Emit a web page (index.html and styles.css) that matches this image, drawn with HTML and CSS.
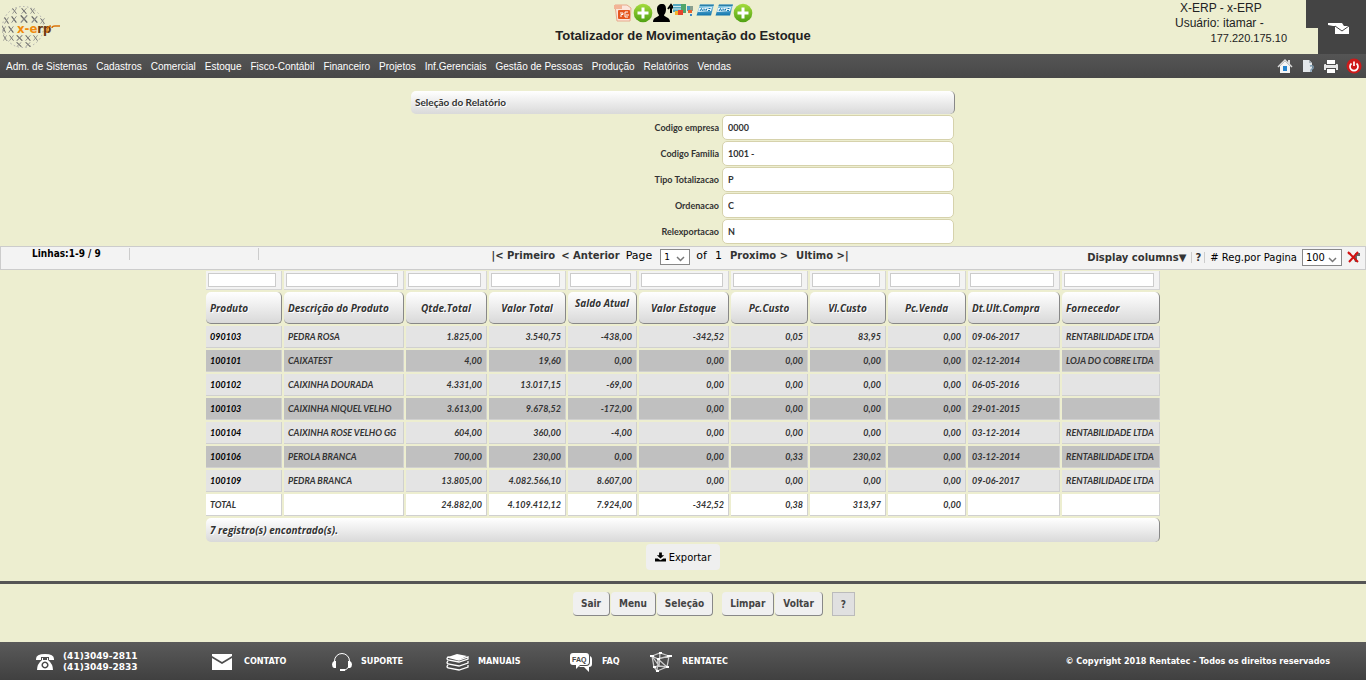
FILE: index.html
```html
<!DOCTYPE html>
<html lang="pt-BR">
<head>
    <meta charset="UTF-8">
    <meta name="viewport" content="width=device-width, initial-scale=1.0">
    <title>Totalizador de Movimentação do Estoque</title>
    <link rel="stylesheet" href="styles.css">
</head>
<body>
    <!-- Shared icon shapes -->
    <svg class="defs" width="0" height="0" aria-hidden="true">
        <defs>
            <linearGradient id="green" x1="0" y1="0" x2="0" y2="1">
                <stop offset="0" stop-color="#a5dc3c"/>
                <stop offset="1" stop-color="#4fa012"/>
            </linearGradient>
            <linearGradient id="blue" x1="0" y1="0" x2="0" y2="1">
                <stop offset="0" stop-color="#8fd0ea"/>
                <stop offset="1" stop-color="#0f74ad"/>
            </linearGradient>
            <symbol id="plus" viewBox="0 0 20 20">
                <circle cx="10" cy="10" r="9.3" fill="url(#green)"/>
                <path d="M10 4.500v11M4.500 10h11" stroke="#fff" stroke-width="3"/>
            </symbol>
            <symbol id="card" viewBox="0 0 18 14">
                <path d="M4 1.500h14l-3 11H.5z" fill="url(#blue)"/>
                <path d="M4 1.500h14l-.5 1.500H3.500z" fill="#2b7fa8"/>
                <path d="M3 5l13-1-1 4-13 1z" fill="#e6f5fb"/>
                <path d="M4 8l1.500-2.500L6.500 8M8 5.500v2l1-1 1 1 1-2M12 7.500h2M12.500 5.500h2" stroke="#1478ae" fill="none"/>
            </symbol>
            <symbol id="mark" viewBox="-2.500 -3 5 6" preserveAspectRatio="none">
                <path d="M-2-2.700L2 2.700" stroke="#666" stroke-width=".9"/>
                <path d="M2-2.700L-2 2.700" stroke="#888" stroke-width=".8"/>
            </symbol>
        </defs>
    </svg>

    <header class="top">
        <a href="#" class="logo" aria-label="x-erp">
            <svg width="62" height="50" viewBox="0 0 62 50">
                <circle cx="23" cy="27" r="20.500" fill="none" stroke="#aaa" stroke-dasharray="1.500 2.500"/>
                <use href="#mark" x="12" y="8" width="5" height="6"/>
                <use href="#mark" x="21" y="8" width="6" height="6"/>
                <use href="#mark" x="30" y="8" width="5" height="6"/>
                <use href="#mark" x="4" y="17" width="5" height="7"/>
                <use href="#mark" x="11" y="16" width="6" height="7"/>
                <use href="#mark" x="20" y="15" width="8" height="8"/>
                <use href="#mark" x="31" y="16" width="7" height="7"/>
                <use href="#mark" x="40" y="18" width="5" height="6"/>
                <use href="#mark" x="2" y="26" width="4" height="7"/>
                <use href="#mark" x="8" y="26" width="6" height="7"/>
                <use href="#mark" x="3" y="35" width="4" height="6"/>
                <use href="#mark" x="9" y="35" width="5" height="6"/>
                <use href="#mark" x="16" y="35" width="7" height="6"/>
                <use href="#mark" x="25" y="35" width="6" height="6"/>
                <use href="#mark" x="33" y="35" width="5" height="6"/>
                <use href="#mark" x="16" y="42" width="6" height="5"/>
                <use href="#mark" x="25" y="42" width="6" height="5"/>
                <text x="17" y="33" class="logo-text"><tspan fill="#f08a0c">x-e</tspan><tspan fill="#6b3a10">rp</tspan></text>
                <path d="M47 33v-4q1-3 4-3M52 28q0-2 3-2h5" fill="none" stroke="#d9730a" stroke-width="1.500"/>
            </svg>
        </a>

        <div class="heading">
            <div class="shortcuts">
                <svg width="20" height="20" viewBox="0 0 20 20">
                    <path d="M2 2h12l4 3-1 13H4z" fill="#fbe6dc" stroke="#e8a98c"/>
                    <rect x="1" y="2" width="8" height="4" fill="#f2b496"/>
                    <rect x="5" y="7" width="12" height="9" rx="1" fill="#e5561f"/>
                    <path d="M7 10h3v1.500H8V14M12 9h3M12 9v5h3M13 12h3" stroke="#fff" fill="none"/>
                </svg>
                <svg width="20" height="20"><use href="#plus"/></svg>
                <svg width="20" height="20" viewBox="0 0 20 20">
                    <path d="M9 1c3 0 4 2 4 5s-1 5-2 6c0 2 6 2 6 7H0c0-5 6-5 6-7-1-1-2-3-2-6s2-5 5-5z" fill="#000"/>
                    <path d="M18 10V4m-3 2l3-4 3 4" stroke="#000" stroke-width="2" fill="none"/>
                </svg>
                <svg width="22" height="20" viewBox="0 0 22 20">
                    <rect x="0" y="1" width="10" height="8" fill="#55a9c0"/>
                    <path d="M0 3.500h10M0 6h10" stroke="#cfe9ee"/>
                    <rect x="8" y="1" width="5" height="9" fill="#4fa56b"/>
                    <path d="M2 8h4v4H2z" fill="#f3b52c"/>
                    <rect x="5" y="7" width="5" height="5" fill="#e5432d"/>
                    <rect x="14" y="3" width="3" height="5" fill="#4a9cc2"/>
                    <rect x="17" y="3" width="3" height="5" fill="#8a9f8e"/>
                    <path d="M15 7h4v3h-4z" fill="#e8632f"/>
                    <rect x="17" y="11" width="2" height="2" fill="#3c86c7"/>
                </svg>
                <svg width="20" height="14"><use href="#card"/></svg>
                <svg width="18" height="14"><use href="#card"/></svg>
                <svg width="20" height="20"><use href="#plus"/></svg>
            </div>
            <h1>Totalizador de Movimentação do Estoque</h1>
        </div>

        <div class="user">
            <div class="user-info">
                <p>X-ERP - x-ERP</p>
                <p>Usuário: itamar -</p>
                <p class="ip">177.220.175.10</p>
            </div>
            <a href="#" class="mail" aria-label="Mensagens">
                <svg width="22" height="14" viewBox="0 0 22 14">
                    <path d="M1 1h14l2 3H6L1 3z" fill="#fff"/>
                    <rect x="8" y="4" width="14" height="8" fill="#fff"/>
                    <path d="M8 4l7 5 7-5" stroke="#444" fill="none"/>
                </svg>
            </a>
        </div>
    </header>

    <nav class="menu">
        <a href="#">Adm. de Sistemas</a>
        <a href="#">Cadastros</a>
        <a href="#">Comercial</a>
        <a href="#">Estoque</a>
        <a href="#">Fisco-Contábil</a>
        <a href="#">Financeiro</a>
        <a href="#">Projetos</a>
        <a href="#">Inf.Gerenciais</a>
        <a href="#">Gestão de Pessoas</a>
        <a href="#">Produção</a>
        <a href="#">Relatórios</a>
        <a href="#">Vendas</a>
        <div class="menu-icons">
            <a href="#" aria-label="Início">
                <svg width="16" height="16" viewBox="0 0 16 16">
                    <path d="M11 2h2v4h-2z" fill="#ddd"/>
                    <path d="M3 8l5-5 5 5v7H3z" fill="#f4f4f4"/>
                    <path d="M1 9l7-7 7 7" stroke="#ddd" stroke-width="1.500" fill="none"/>
                    <rect x="6" y="8" width="4" height="5" fill="#2584cf"/>
                </svg>
            </a>
            <a href="#" aria-label="Novo documento">
                <svg width="16" height="16" viewBox="0 0 16 16">
                    <path d="M3 2h6l3 3v9H3z" fill="#e3e7ea"/>
                    <path d="M9 2v3h3z" fill="#a9b3ba"/>
                    <path d="M10 8q4-1 3 2l-2 2v2" stroke="#7d9bb0" stroke-width="1.500" fill="none"/>
                </svg>
            </a>
            <a href="#" aria-label="Imprimir">
                <svg width="16" height="16" viewBox="0 0 16 16">
                    <path d="M4 2h8v4H4z" fill="#fff"/>
                    <path d="M1 7q0-1 1-1h1v1h10V6h1q1 0 1 1v5h-2v-2H3v2H1z" fill="#e8e8e8"/>
                    <path d="M4 11h8v4H4z" fill="#fff"/>
                </svg>
            </a>
            <a href="#" aria-label="Sair do sistema">
                <svg width="16" height="16" viewBox="0 0 16 16">
                    <circle cx="8" cy="8" r="7.500" fill="#cf1a1a"/>
                    <path d="M5.500 5.500a4 4 0 1 0 5 0M8 3.500V8" stroke="#fff" stroke-width="1.700" fill="none"/>
                </svg>
            </a>
        </div>
    </nav>

    <main>
        <!-- Report filter -->
        <form class="selection">
            <h2 class="bar">Seleção do Relatório</h2>
            <div class="field">
                <label for="empresa">Codigo empresa</label>
                <input type="text" id="empresa" value="0000" readonly>
            </div>
            <div class="field">
                <label for="familia">Codigo Familia</label>
                <input type="text" id="familia" value="1001 -" readonly>
            </div>
            <div class="field">
                <label for="tipo">Tipo Totalizacao</label>
                <input type="text" id="tipo" value="P" readonly>
            </div>
            <div class="field">
                <label for="ordem">Ordenacao</label>
                <input type="text" id="ordem" value="C" readonly>
            </div>
            <div class="field">
                <label for="relexp">Relexportacao</label>
                <input type="text" id="relexp" value="N" readonly>
            </div>
        </form>

        <!-- Paging toolbar -->
        <div class="toolbar">
            <div class="lines">
                <strong>Linhas:1-9 / 9</strong>
                <span></span>
            </div>
            <div class="pager">
                <a href="#">|&lt; Primeiro</a>
                <a href="#">&lt; Anterior</a>
                <label for="page">Page</label>
                <select id="page"><option>1</option></select>
                <span>of</span>
                <span class="total">1</span>
                <a href="#">Proximo &gt;</a>
                <a href="#" class="last">Ultimo &gt;|</a>
            </div>
            <div class="options">
                <a href="#">Display columns▼</a>
                <a href="#" class="help">?</a>
                <label for="rows"># Reg.por Pagina</label>
                <select id="rows"><option>100</option></select>
                <a href="#" aria-label="Limpar filtro">
                    <svg width="13" height="12" viewBox="0 0 13 12">
                        <path d="M6 5h4v6H8zM8 2h5v3H9z" fill="#666"/>
                        <path d="M1 1l10 10M11 1L2 11M1 2l3 1" stroke="#d41111" stroke-width="2" fill="none"/>
                    </svg>
                </a>
            </div>
        </div>

        <table class="report">
            <colgroup>
                <col class="w76"><col class="w120"><col class="w81"><col class="w77"><col class="w69"><col class="w90">
                <col class="w77"><col class="w76"><col class="w78"><col class="w92"><col class="w98">
            </colgroup>
            <thead>
                <tr class="filters">
                    <td><input type="text" aria-label="Filtrar Produto"></td>
                    <td><input type="text" aria-label="Filtrar Descrição"></td>
                    <td><input type="text" aria-label="Filtrar Qtde.Total"></td>
                    <td><input type="text" aria-label="Filtrar Valor Total"></td>
                    <td><input type="text" aria-label="Filtrar Saldo Atual"></td>
                    <td><input type="text" aria-label="Filtrar Valor Estoque"></td>
                    <td><input type="text" aria-label="Filtrar Pc.Custo"></td>
                    <td><input type="text" aria-label="Filtrar Vl.Custo"></td>
                    <td><input type="text" aria-label="Filtrar Pc.Venda"></td>
                    <td><input type="text" aria-label="Filtrar Dt.Ult.Compra"></td>
                    <td><input type="text" aria-label="Filtrar Fornecedor"></td>
                </tr>
                <tr>
                    <th class="text">Produto</th>
                    <th class="text">Descrição do Produto</th>
                    <th>Qtde.Total</th>
                    <th>Valor Total</th>
                    <th class="sorted">Saldo Atual</th>
                    <th>Valor Estoque</th>
                    <th>Pc.Custo</th>
                    <th>Vl.Custo</th>
                    <th>Pc.Venda</th>
                    <th class="text">Dt.Ult.Compra</th>
                    <th class="text">Fornecedor</th>
                </tr>
            </thead>
            <tbody>
                <tr><td>090103</td><td>PEDRA ROSA</td><td>1.825,00</td><td>3.540,75</td><td>-438,00</td><td>-342,52</td><td>0,05</td><td>83,95</td><td>0,00</td><td>09-06-2017</td><td>RENTABILIDADE LTDA</td></tr>
                <tr><td>100101</td><td>CAIXATEST</td><td>4,00</td><td>19,60</td><td>0,00</td><td>0,00</td><td>0,00</td><td>0,00</td><td>0,00</td><td>02-12-2014</td><td>LOJA DO COBRE LTDA</td></tr>
                <tr><td>100102</td><td>CAIXINHA DOURADA</td><td>4.331,00</td><td>13.017,15</td><td>-69,00</td><td>0,00</td><td>0,00</td><td>0,00</td><td>0,00</td><td>06-05-2016</td><td></td></tr>
                <tr><td>100103</td><td>CAIXINHA NIQUEL VELHO</td><td>3.613,00</td><td>9.678,52</td><td>-172,00</td><td>0,00</td><td>0,00</td><td>0,00</td><td>0,00</td><td>29-01-2015</td><td></td></tr>
                <tr><td>100104</td><td>CAIXINHA ROSE VELHO GG</td><td>604,00</td><td>360,00</td><td>-4,00</td><td>0,00</td><td>0,00</td><td>0,00</td><td>0,00</td><td>03-12-2014</td><td>RENTABILIDADE LTDA</td></tr>
                <tr><td>100106</td><td>PEROLA BRANCA</td><td>700,00</td><td>230,00</td><td>0,00</td><td>0,00</td><td>0,33</td><td>230,02</td><td>0,00</td><td>03-12-2014</td><td>RENTABILIDADE LTDA</td></tr>
                <tr><td>100109</td><td>PEDRA BRANCA</td><td>13.805,00</td><td>4.082.566,10</td><td>8.607,00</td><td>0,00</td><td>0,00</td><td>0,00</td><td>0,00</td><td>09-06-2017</td><td>RENTABILIDADE LTDA</td></tr>
                <tr class="sum"><td>TOTAL</td><td></td><td>24.882,00</td><td>4.109.412,12</td><td>7.924,00</td><td>-342,52</td><td>0,38</td><td>313,97</td><td>0,00</td><td></td><td></td></tr>
            </tbody>
            <tfoot>
                <tr><td colspan="11" class="bar">7 registro(s) encontrado(s).</td></tr>
            </tfoot>
        </table>

        <button type="button" class="export">
            <svg width="11" height="10" viewBox="0 0 12 10">
                <path d="M4.500 0h3v3H10L6 6.500 2 3h2.500z"/>
                <path d="M0 6.500h3l3 2 3-2h3V10H0z"/>
            </svg>
            Exportar
        </button>

        <div class="actions">
            <button type="button">Sair</button>
            <button type="button">Menu</button>
            <button type="button">Seleção</button>
            <button type="button" class="apart">Limpar</button>
            <button type="button">Voltar</button>
            <button type="button" class="question">?</button>
        </div>
    </main>

    <footer class="bottom">
        <div class="contact phone">
            <svg width="18" height="18" viewBox="0 0 18 18" fill="#fff">
                <path d="M0 6q0-5 9-5t9 5v1h-5V4H5v3H0z"/>
                <path fill-rule="evenodd" d="M6 5h1v2h4V5h1v2q5 4 5 10H1Q1 11 6 7zM9 8.500a3.500 3.500 0 1 0 .01 0zM9 10a2 2 0 1 1-.01 0z"/>
            </svg>
            <p>(41)3049-2811<br>(41)3049-2833</p>
        </div>
        <a href="#" class="contact mailto">
            <svg width="20" height="16" viewBox="0 0 20 16" fill="#fff">
                <path d="M0 0h20v2l-10 6L0 2z"/>
                <path d="M0 4l10 6 10-6v12H0z"/>
            </svg>
            CONTATO
        </a>
        <a href="#" class="contact support">
            <svg width="20" height="18" viewBox="0 0 20 18">
                <path d="M2.500 9V8a7.500 7.500 0 0 1 15 0v1M17 13q-1 3-4 4" fill="none" stroke="#fff"/>
                <path d="M4 8v7H2Q0 14 0 11.500T2 8zM16 8v7h2q2-1 2-3.500T18 8zM8 16h5v2H8z" fill="#fff"/>
            </svg>
            SUPORTE
        </a>
        <a href="#" class="contact manuals">
            <svg width="23" height="18" viewBox="0 0 23 18">
                <path d="M2 4l9-3 10 2-8 4z" fill="#fff"/>
                <path d="M2 4q-2 2 0 3l11 2 9-3V4l-9 3zM2 8q-2 2 0 3l11 2 9-3V8M2 12q-2 2 0 3l11 2 9-3v-2" fill="none" stroke="#fff" stroke-width="1.300"/>
            </svg>
            MANUAIS
        </a>
        <a href="#" class="contact faq">
            <svg width="23" height="20" viewBox="0 0 23 20">
                <path d="M3 1h13q3 0 3 3v6q0 3-3 3h-6l-4 4v-4H3q-3 0-3-3V4q0-3 3-3z" fill="#fff"/>
                <path d="M20 4q2 1 2 3v5q0 3-3 3v5l-5-5H9l1-1h6q4 0 4-4z" fill="#fff"/>
                <text x="2" y="10" class="faq-text">FAQ</text>
            </svg>
            FAQ
        </a>
        <a href="#" class="contact rentatec">
            <svg width="24" height="22" viewBox="0 0 24 22" fill="none" stroke="#ccc">
                <path d="M3 5l6 3 11-3M3 5l8-3 9 3M9 8l-1 12M20 5l-2 11M3 5l2 11 3 4 10-4M11 2l-1 13M5 16l5-1 8 1M9 8l9 8M3 5l7 10" stroke-width="1.300"/>
                <path d="M1 5h4M8 8h3M18 5h5M4 16h3M7 20h3M10 2h3M17 16h3" stroke="#fff" stroke-width="2"/>
            </svg>
            RENTATEC
        </a>
        <p class="copyright">© Copyright 2018 Rentatec - Todos os direitos reservados</p>
    </footer>
</body>
</html>
```

FILE: styles.css
```css
body {
    margin: 0;
    min-height: 100vh;
    display: flex;
    flex-direction: column;
    background-color: #edeed0;
    font-family: "Liberation Sans", Arial, sans-serif;
    color: #222;
}

h1,
h2,
p {
    margin: 0;
}

a {
    color: inherit;
    text-decoration: none;
}

svg {
    flex: none;
}

.defs {
    position: absolute;
}

/* Header */
.top {
    display: grid;
    grid-template-columns: 1fr auto 1fr;
    height: 54px;
}

.logo-text {
    font: bold 13px "DejaVu Sans Condensed", "DejaVu Sans", sans-serif;
}

.heading {
    display: flex;
    flex-direction: column;
    align-items: center;
}

.shortcuts {
    display: flex;
    align-items: flex-start;
    height: 24px;
    padding-top: 3px;
    box-sizing: border-box;
}

.heading h1 {
    font-size: 13px;
    line-height: 23px;
}

.user {
    display: flex;
    justify-content: flex-end;
}

.user-info {
    width: 132px;
    padding-top: 1px;
    font-size: 12px;
    line-height: 15px;
}

.user-info p {
    padding-left: 1px;
}

.user-info p:first-child {
    padding-left: 6px;
}

.user-info .ip {
    padding: 0 19px 0 0;
    font-size: 11px;
    text-align: right;
}

.mail {
    display: flex;
    justify-content: center;
    align-items: center;
    width: 60px;
    padding: 4px 0 0 4px;
    box-sizing: border-box;
    background-color: #444;
    clip-path: polygon(0 0, 100% 0, 100% 100%, 12px 100%, 12px 28px, 0 28px);
}

/* Menu */
.menu {
    display: flex;
    align-items: center;
    gap: 9px;
    height: 24px;
    padding: 0 4px 0 6px;
    background: linear-gradient(#555, #484848);
    color: #fff;
    font-size: 10px;
}

.menu-icons {
    display: flex;
    gap: 7px;
    margin-left: auto;
}

.menu-icons a {
    display: flex;
}

main {
    display: flex;
    flex-direction: column;
    align-items: center;
    flex: 1;
}

.bar {
    background: linear-gradient(#fff, #d9d9d9);
    border-right: 1px solid #888;
    border-radius: 5px;
    text-shadow: 1px 1px 0 #fff;
}

/* Report filter */
.selection {
    width: 544px;
    padding: 13px 0 2px;
    font-family: Lato, Carlito, Calibri, sans-serif;
    font-size: 9px;
    font-weight: bold;
    color: #333;
}

.selection .bar {
    padding-left: 4px;
    font-size: 10px;
    line-height: 23px;
}

.field {
    display: flex;
    justify-content: flex-end;
    align-items: center;
    gap: 3px;
    height: 26px;
    padding-right: 1px;
}

.field input {
    width: 232px;
    height: 25px;
    padding: 0 5px;
    box-sizing: border-box;
    border: 1px solid #d6d2ac;
    border-radius: 5px;
    background-color: #fff;
    font: inherit;
    color: inherit;
}

/* Paging toolbar */
.toolbar {
    display: flex;
    justify-content: space-between;
    align-self: stretch;
    height: 22px;
    border: 1px solid #ccc;
    background-color: #f3f3f3;
    font-family: "DejaVu Sans", Verdana, sans-serif;
    font-size: 11px;
    color: #000;
}

.toolbar a {
    font-size: 10px;
    font-weight: bold;
    color: #333;
}

.lines {
    display: flex;
    padding-top: 1px;
    font-family: "DejaVu Sans Condensed", "DejaVu Sans", sans-serif;
    font-size: 10px;
    line-height: 12px;
}

.lines strong,
.lines span {
    width: 129px;
    height: 12px;
    border-right: 1px solid #ccc;
    box-sizing: border-box;
}

.lines strong {
    padding-left: 31px;
}

.pager,
.options {
    display: flex;
    align-items: center;
    gap: 6px;
}

.pager {
    height: 18px;
    padding-right: 6px;
    line-height: 12px;
}

.pager select {
    margin: 2px 0 0 2px;
}

.pager .total {
    padding: 0 2px;
}

.pager .last {
    padding-left: 2px;
}

.toolbar select {
    width: 30px;
    height: 16px;
    padding: 0 3px;
    border: 1px solid #888;
    border-radius: 0;
    appearance: none;
    background: #fff url("data:image/svg+xml,%3Csvg xmlns='http://www.w3.org/2000/svg' width='9' height='6'%3E%3Cpath d='M1 1l3.500 3.500L8 1' fill='none' stroke='%23777' stroke-width='1.500'/%3E%3C/svg%3E") no-repeat right 4px bottom 2px;
    font: 9px "DejaVu Sans", Verdana, sans-serif;
}

.options {
    gap: 5px;
    height: 20px;
    padding-right: 5px;
    font-size: 10px;
}

.options select {
    width: 40px;
    height: 17px;
    font-family: "DejaVu Sans Condensed", "DejaVu Sans", sans-serif;
    font-size: 11px;
}

.options .help {
    padding: 0 3px;
    border: solid #ccc;
    border-width: 0 1px;
}

.options a {
    display: flex;
}

/* Report table */
.report {
    width: 958px;
    margin-top: -1px;
    table-layout: fixed;
    border-spacing: 2px;
    font-family: Lato, Carlito, Calibri, sans-serif;
    font-size: 9px;
    font-style: italic;
    font-weight: bold;
    line-height: 12px;
    color: #333;
}

.w69 { width: 69px; }
.w76 { width: 76px; }
.w77 { width: 77px; }
.w78 { width: 78px; }
.w81 { width: 81px; }
.w90 { width: 90px; }
.w92 { width: 92px; }
.w98 { width: 98px; }
.w120 { width: 120px; }

.report td,
.report th {
    box-sizing: border-box;
    padding: 0 4px;
    white-space: nowrap;
}

.report .filters td {
    height: 19px;
    padding: 0 5px 0 2px;
    background-color: #f3f3f3;
    border: solid #d5d5d5;
    border-width: 0 1px 1px 0;
    line-height: 0;
}

.filters input {
    width: 100%;
    height: 14px;
    padding: 0 2px;
    box-sizing: border-box;
    border: 1px solid #ccc;
    background-color: #fff;
}

.report th {
    height: 32px;
    background: linear-gradient(#fff, #d9d9d9);
    border: solid #888;
    border-width: 0 1px 1px 0;
    border-radius: 5px;
    text-shadow: 1px 1px 0 #fff;
}

.report th,
.report tfoot td {
    font-family: "Open Sans", "Noto Sans", sans-serif;
    font-size: 10px;
}

.report .text {
    text-align: left;
}

.report .sorted {
    padding-top: 5px;
    vertical-align: top;
}

.report tbody td {
    height: 22px;
    background-color: #e4e4e4;
    border: solid #d0d0d0;
    border-width: 0 1px 1px 0;
    text-align: right;
}

.report tbody tr:nth-child(even) td {
    background-color: #c0c0c0;
}

.report tbody td:nth-child(1),
.report tbody td:nth-child(2),
.report tbody td:nth-child(n+10) {
    text-align: left;
}

.report tbody td:first-child {
    color: #000;
}

.report tbody tr.sum:last-child td {
    background-color: #fff;
    color: #333;
}

.report tfoot td {
    height: 24px;
}

.export {
    display: flex;
    align-items: center;
    gap: 3px;
    height: 26px;
    padding: 0 9px;
    border: none;
    border-radius: 4px;
    background-color: #efefef;
    font: 11px "DejaVu Sans Condensed", "DejaVu Sans", sans-serif;
    color: #000;
}

/* Action buttons */
.actions {
    display: flex;
    justify-content: center;
    align-self: stretch;
    margin-top: 11px;
    padding: 8px 0 26px 63px;
    border-top: 3px solid #555;
}

.actions button {
    height: 24px;
    padding: 0 8px;
    margin-right: 1px;
    border: solid #888;
    border-width: 0 1px 1px 0;
    border-radius: 4px;
    background-color: #f0f0f0;
    font: bold 10px "DejaVu Sans Condensed", "DejaVu Sans", sans-serif;
    color: #444;
}

.actions .apart {
    margin-left: 8px;
}

.actions .question {
    margin-left: 8px;
    border: 1px solid #bbb;
    border-radius: 0;
    background-color: #e0e0e0;
}

/* Footer */
.bottom {
    display: flex;
    align-items: center;
    height: 38px;
    padding: 0 36px;
    background: linear-gradient(#5a5a5a, #404040);
    font: bold 9px/11px "DejaVu Sans Condensed", "DejaVu Sans", sans-serif;
    color: #fff;
}

.contact {
    display: flex;
    align-items: center;
    gap: 9px;
    padding-top: 1px;
    box-sizing: border-box;
}

.phone {
    width: 176px;
    font-family: "DejaVu Sans", sans-serif;
}

.mailto {
    gap: 12px;
    width: 120px;
}

.support {
    width: 114px;
}

.manuals {
    width: 124px;
}

.faq {
    width: 79px;
}

.faq-text {
    font: bold 7px "Liberation Sans", Arial, sans-serif;
    fill: #444;
}

.copyright {
    margin-left: auto;
    padding-top: 1px;
}
```
